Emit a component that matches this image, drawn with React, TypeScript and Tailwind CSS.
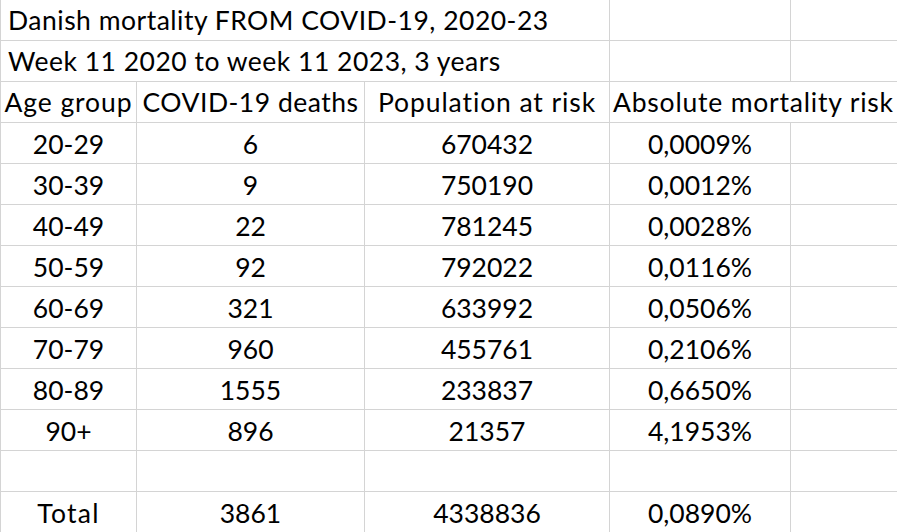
import React from "react";

const data: string[][] = [
  ["20-29", "6", "670432", "0,0009%"],
  ["30-39", "9", "750190", "0,0012%"],
  ["40-49", "22", "781245", "0,0028%"],
  ["50-59", "92", "792022", "0,0116%"],
  ["60-69", "321", "633992", "0,0506%"],
  ["70-79", "960", "455761", "0,2106%"],
  ["80-89", "1555", "233837", "0,6650%"],
  ["90+", "896", "21357", "4,1953%"],
  ["", "", "", ""],
  ["Total", "3861", "4338836", "0,0890%"],
];

function Cell({
  children,
  className = "",
}: {
  children?: React.ReactNode;
  className?: string;
}) {
  return (
    <div
      className={
        "h-[41px] border-b border-[#d4d4d4] flex items-end whitespace-nowrap " +
        className
      }
    >
      {children}
    </div>
  );
}

export default function App() {
  return (
    <div
      className="w-[897px] h-[532px] overflow-hidden bg-white text-black"
      style={{ fontFamily: "Lato, 'Liberation Sans', sans-serif" }}
    >
      <div className="grid grid-cols-[136px_228px_245px_181px_1fr] border-l border-[#d4d4d4] text-[26.5px] leading-none">
        {/* Row 1 */}
        <Cell className="col-span-3 border-r pl-[7px] pb-[7px] tracking-[0.5px]">
          Danish mortality FROM COVID-19, 2020-23
        </Cell>
        <Cell className="border-r" />
        <Cell />
        {/* Row 2 */}
        <Cell className="col-span-3 border-r pl-[7px] pb-[7px] tracking-[0.5px]">
          Week 11 2020 to week 11 2023, 3 years
        </Cell>
        <Cell className="border-r" />
        <Cell />
        {/* Row 3 */}
        <Cell className="border-r justify-center pb-[7px] tracking-[0.9px]">Age group</Cell>
        <Cell className="border-r justify-center pb-[7px] tracking-[0.5px]">COVID-19 deaths</Cell>
        <Cell className="border-r justify-center pb-[7px] tracking-[0.9px]">Population at risk</Cell>
        <Cell className="col-span-2 pl-[3px] pb-[7px] tracking-[0.8px]">Absolute mortality risk</Cell>
        {/* Data rows */}
        {data.map((r, i) => (
          <React.Fragment key={i}>
            <Cell className={"border-r justify-center pb-[6px] " + (r[0] === "Total" ? "tracking-[1.3px]" : "")}>
              {r[0]}
            </Cell>
            <Cell className="border-r justify-center pb-[6px]">{r[1]}</Cell>
            <Cell className="border-r justify-center pb-[6px]">{r[2]}</Cell>
            <Cell className="border-r justify-center pb-[6px]">{r[3]}</Cell>
            <Cell />
          </React.Fragment>
        ))}
      </div>
    </div>
  );
}
